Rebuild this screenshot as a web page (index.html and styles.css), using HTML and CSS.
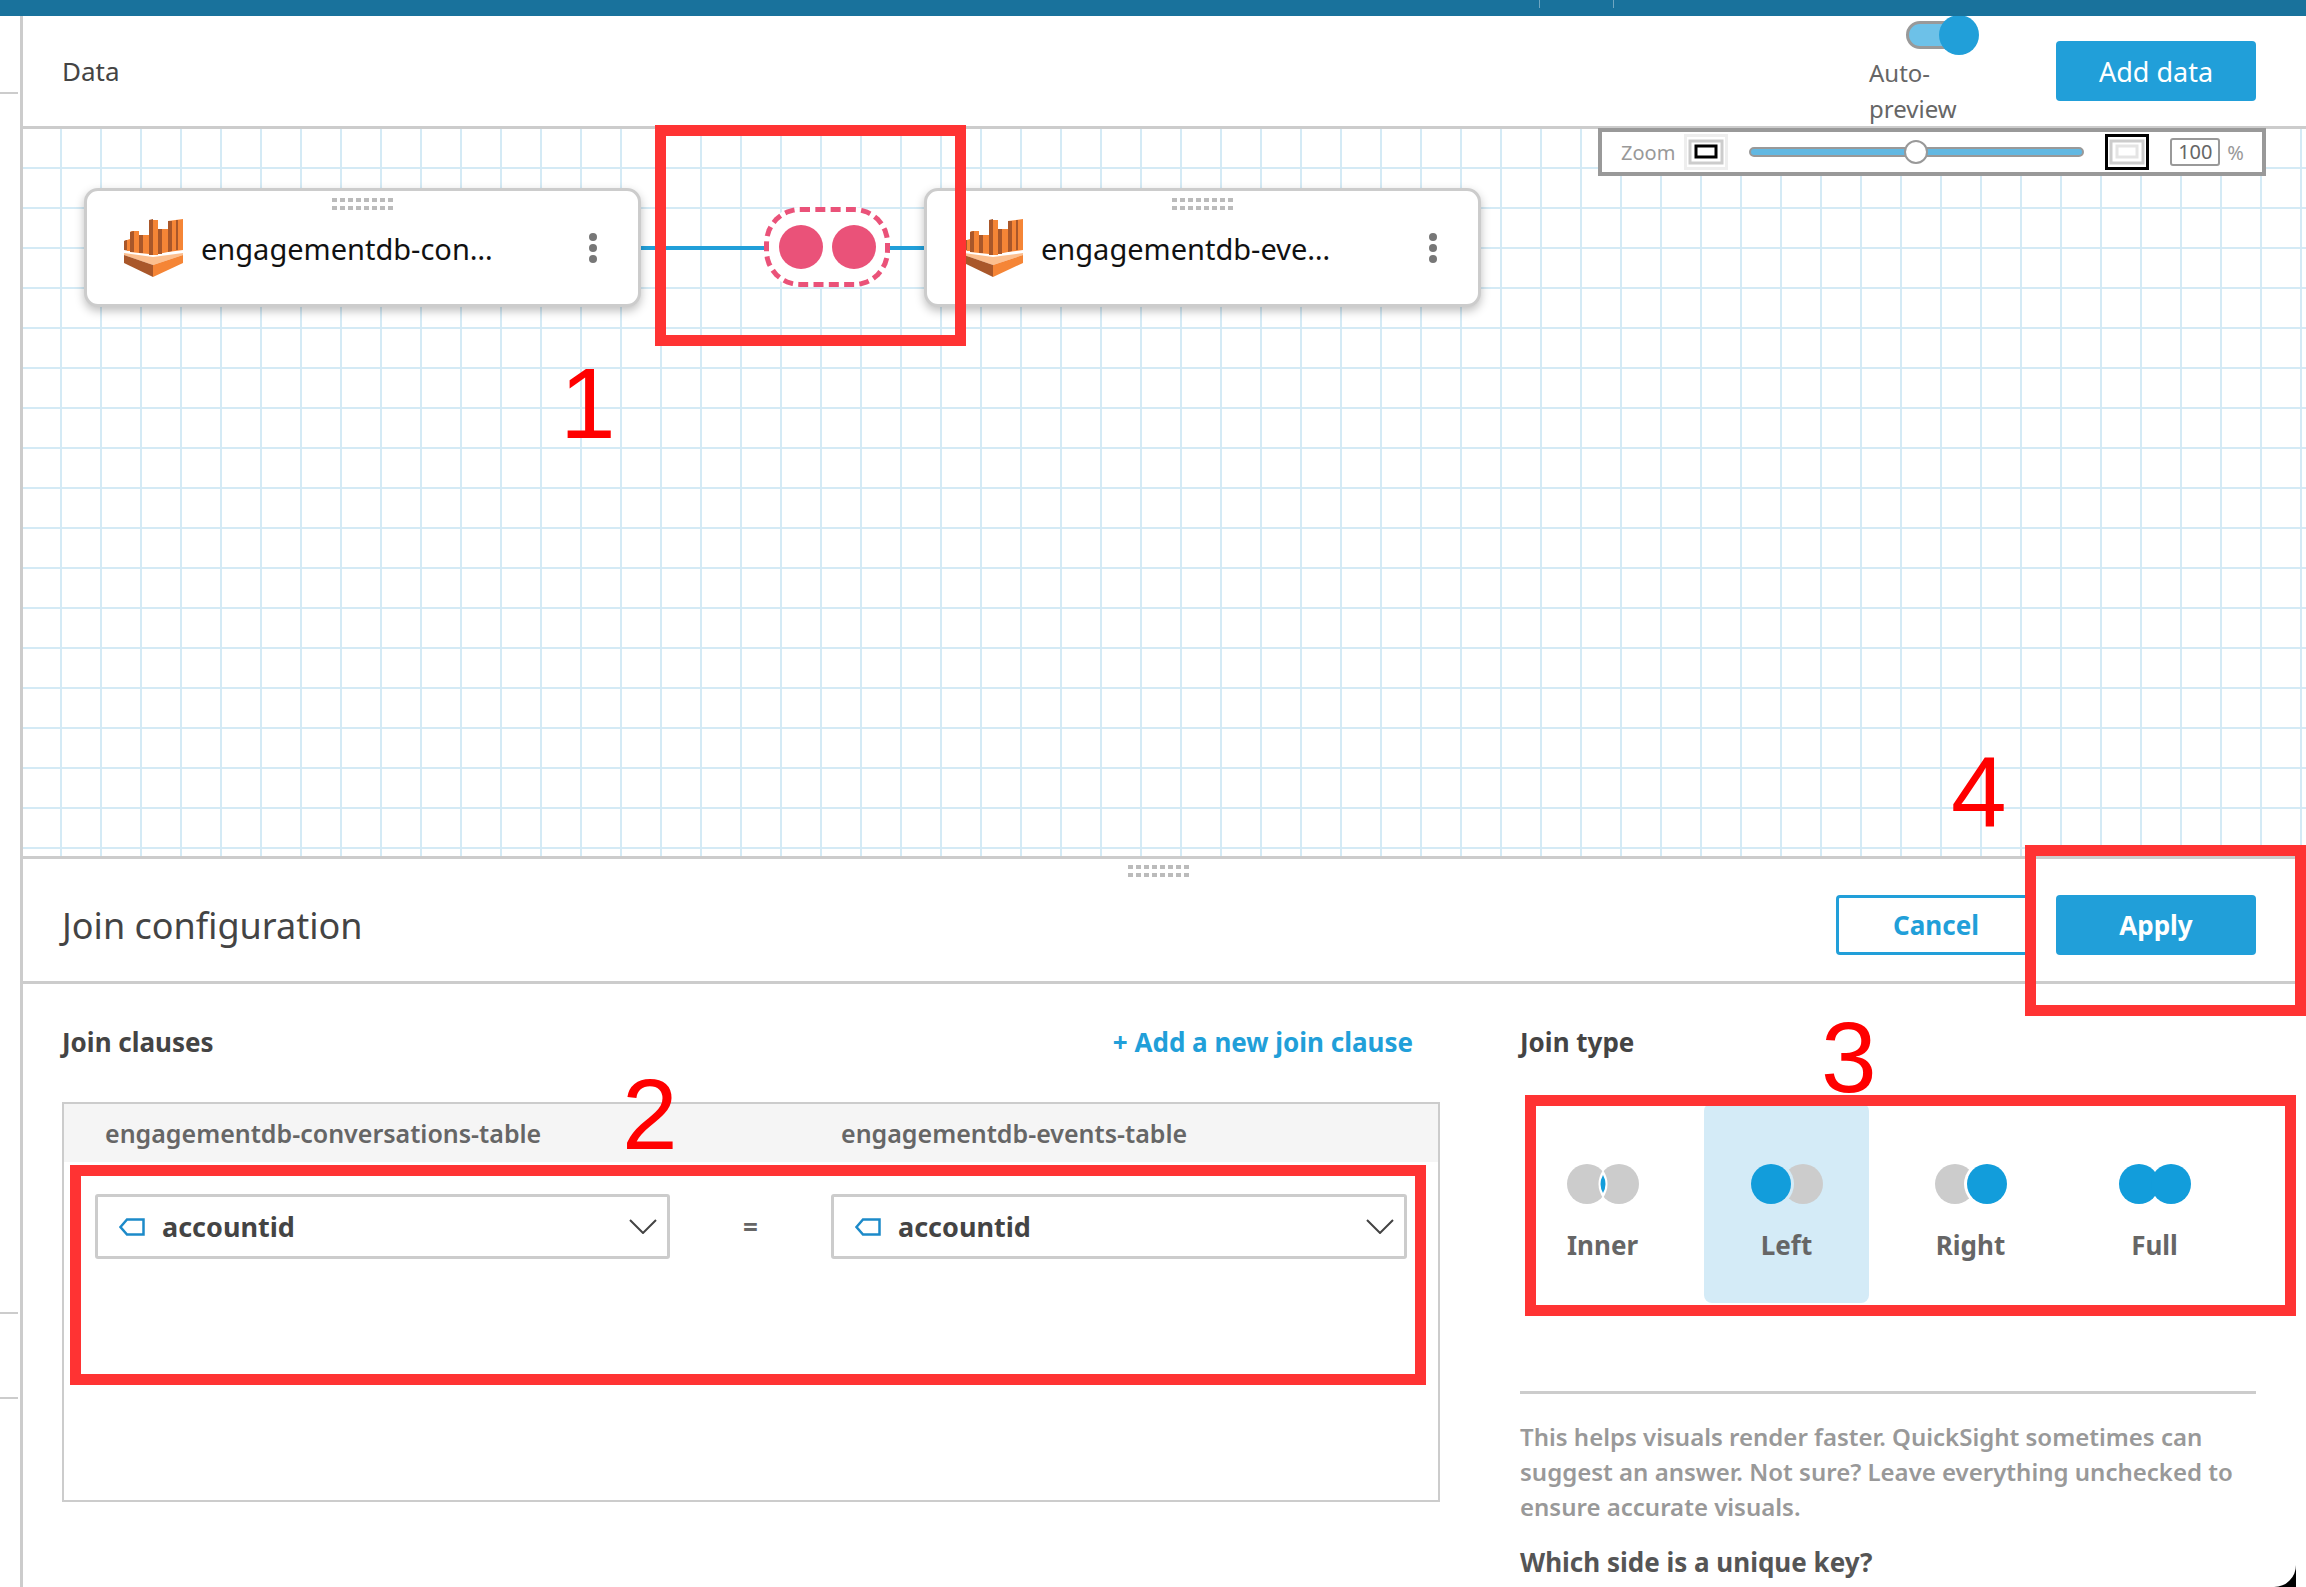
FILE: index.html
```html
<!DOCTYPE html>
<html>
  <head>
    <title>Join configuration</title>
    <link rel="stylesheet" href="styles.css">
  </head>
  <body>
    <svg class="defs" width="0" height="0">
      <symbol id="bars" viewBox="0 0 60 58">
        <polygon points="0,22 2,21 6,21 6,32 0,31" fill="#a9572a"/>
        <polygon points="3,21 6,20 6,32 3,32" fill="#f58536"/>
        <polygon points="6,13 8,12 15,12 15,34 6,33" fill="#f58536"/>
        <polygon points="6,13 10,12 10,33 6,33" fill="#a9572a"/>
        <polygon points="15,16 25,16 25,35 15,34" fill="#f58536"/>
        <polygon points="15,16 19,16 19,34 15,34" fill="#a9572a"/>
        <polygon points="25,1 34,1 34,36 25,36" fill="#f58536"/>
        <polygon points="25,1 29,0 29,36 25,36" fill="#a9572a"/>
        <polygon points="34,10 44,10 44,33 34,35" fill="#f58536"/>
        <polygon points="34,10 38,10 38,35 34,35" fill="#a9572a"/>
        <polygon points="44,2 59,0 59,31 44,33" fill="#f58536"/>
        <polygon points="44,2 48,2 48,32 44,33" fill="#a9572a"/>
        <polygon points="52,1 54,1 54,31 52,31" fill="#a9572a"/>
        <polygon points="0,34 29,38 59,34 59,36 29,46 0,36" fill="#fcbf8f"/>
        <polygon points="0,36 29,46 29,58 0,44" fill="#a9572a"/>
        <polygon points="29,46 59,36 59,44 29,58" fill="#f58536"/>
      </symbol>
    </svg>

    <div class="app">
      <div class="topbar">
        <span class="tick tick-a"></span>
        <span class="tick tick-b"></span>
      </div>

      <div class="workspace">
        <div class="rail">
          <span class="rail-line rail-a"></span>
          <span class="rail-line rail-b"></span>
          <span class="rail-line rail-c"></span>
        </div>

        <div class="content">
          <div class="data-head">
            <div class="data-title">Data</div>
            <div class="head-actions">
              <div class="preview">
                <div class="toggle">
                  <span class="toggle-track"></span>
                  <span class="toggle-knob"></span>
                </div>
                <span class="preview-label">Auto-preview</span>
              </div>
              <button class="btn btn-primary">Add data</button>
            </div>
          </div>

          <div class="canvas">
            <div class="zoom-bar">
              <span class="zoom-label">Zoom</span>
              <svg class="zoom-icon" viewBox="0 0 44 36">
                <rect x="1.5" y="1.5" width="41" height="33" fill="#fff" stroke="#eee" stroke-width="3"/>
                <rect x="6" y="7" width="32" height="22" fill="#fff" stroke="#ccc" stroke-width="3"/>
                <rect x="12" y="12" width="20" height="11" fill="#fff" stroke="#000" stroke-width="3"/>
              </svg>
              <div class="slider"><span class="slider-thumb"></span></div>
              <svg class="zoom-icon" viewBox="0 0 44 36">
                <rect x="1.5" y="1.5" width="41" height="33" fill="#fff" stroke="#000" stroke-width="3"/>
                <rect x="6" y="7" width="32" height="22" fill="#fff" stroke="#ccc" stroke-width="3"/>
                <rect x="12" y="12" width="20" height="11" fill="#fff" stroke="#e4e4e4" stroke-width="3"/>
              </svg>
              <span class="zoom-input">100</span>
              <span class="zoom-label">%</span>
            </div>

            <div class="link-line"></div>

            <div class="node node-a">
              <div class="grip"></div>
              <div class="node-row">
                <svg class="node-icon"><use href="#bars"/></svg>
                <span class="node-name">engagementdb-con…</span>
                <span class="kebab"><i></i><i></i><i></i></span>
              </div>
            </div>

            <div class="join-node">
              <span class="join-dot"></span>
              <span class="join-dot"></span>
            </div>

            <div class="node node-b">
              <div class="grip"></div>
              <div class="node-row">
                <svg class="node-icon"><use href="#bars"/></svg>
                <span class="node-name">engagementdb-eve…</span>
                <span class="kebab"><i></i><i></i><i></i></span>
              </div>
            </div>
          </div>

          <div class="join-panel">
            <div class="grip panel-grip"></div>
            <div class="join-head">
              <div class="join-title">Join configuration</div>
              <div class="join-actions">
                <button class="btn btn-outline">Cancel</button>
                <button class="btn btn-primary btn-bold">Apply</button>
              </div>
            </div>

            <div class="join-body">
              <div class="clauses">
                <div class="section-head">
                  <span class="section-title">Join clauses</span>
                  <span class="add-clause">+ Add a new join clause</span>
                </div>
                <div class="clause-table">
                  <div class="clause-grid clause-names">
                    <span>engagementdb-conversations-table</span>
                    <span></span>
                    <span>engagementdb-events-table</span>
                  </div>
                  <div class="clause-grid clause-row">
                    <div class="select">
                      <svg class="tag" viewBox="0 0 26 18"><polygon points="1.5,9 8,1.5 24.5,1.5 24.5,16.5 8,16.5" fill="none" stroke="#1c8ac9" stroke-width="2.5"/></svg>
                      <span class="select-value">accountid</span>
                      <svg class="chevron" viewBox="0 0 28 15"><polyline points="1,1 14,14 27,1" fill="none" stroke="#444" stroke-width="2"/></svg>
                    </div>
                    <span class="equals">=</span>
                    <div class="select">
                      <svg class="tag" viewBox="0 0 26 18"><polygon points="1.5,9 8,1.5 24.5,1.5 24.5,16.5 8,16.5" fill="none" stroke="#1c8ac9" stroke-width="2.5"/></svg>
                      <span class="select-value">accountid</span>
                      <svg class="chevron" viewBox="0 0 28 15"><polyline points="1,1 14,14 27,1" fill="none" stroke="#444" stroke-width="2"/></svg>
                    </div>
                  </div>
                </div>
              </div>

              <div class="join-type">
                <div class="section-head">
                  <span class="section-title">Join type</span>
                </div>
                <div class="type-tiles">
                  <div class="tile">
                    <svg class="venn" viewBox="0 0 72 40">
                      <circle cx="20" cy="20" r="20" fill="#ccc"/>
                      <circle cx="52" cy="20" r="20" fill="#ccc"/>
                      <path d="M36 6 Q27 20 36 34 Q45 20 36 6Z" fill="#fff"/>
                      <path d="M36 11 Q31 20 36 29 Q41 20 36 11Z" fill="#129ddb"/>
                    </svg>
                    <span>Inner</span>
                  </div>
                  <div class="tile tile-active">
                    <svg class="venn" viewBox="0 0 72 40">
                      <circle cx="52" cy="20" r="20" fill="#ccc"/>
                      <circle cx="20" cy="20" r="23" fill="#d4ebf7"/>
                      <circle cx="20" cy="20" r="20" fill="#129ddb"/>
                    </svg>
                    <span>Left</span>
                  </div>
                  <div class="tile">
                    <svg class="venn" viewBox="0 0 72 40">
                      <circle cx="20" cy="20" r="20" fill="#ccc"/>
                      <circle cx="52" cy="20" r="23" fill="#fff"/>
                      <circle cx="52" cy="20" r="20" fill="#129ddb"/>
                    </svg>
                    <span>Right</span>
                  </div>
                  <div class="tile">
                    <svg class="venn" viewBox="0 0 72 40">
                      <circle cx="20" cy="20" r="20" fill="#129ddb"/>
                      <circle cx="52" cy="20" r="20" fill="#129ddb"/>
                    </svg>
                    <span>Full</span>
                  </div>
                </div>
                <p class="help">This helps visuals render faster. QuickSight sometimes can suggest an answer. Not sure? Leave everything unchecked to ensure accurate visuals.</p>
                <div class="unique-key">Which side is a unique key?</div>
              </div>
            </div>
          </div>
        </div>
      </div>

      <!-- red callouts drawn over the screenshot -->
      <div class="callout callout-1"></div>
      <div class="callout callout-2"></div>
      <div class="callout callout-3"></div>
      <div class="callout callout-4"></div>
      <span class="digit digit-1">1</span>
      <span class="digit digit-2">2</span>
      <span class="digit digit-3">3</span>
      <span class="digit digit-4">4</span>

      <svg class="corner" viewBox="0 0 22 22"><path d="M22 0 V22 H0 A22 22 0 0 0 22 0Z" fill="#000"/></svg>
    </div>
  </body>
</html>
```
FILE: styles.css
```css
body { margin: 0; background: #fff; font-family: "Noto Sans", "Open Sans", sans-serif; color: #444; }

.defs { position: absolute; }

.app {
  position: relative;
  width: 2306px;
  height: 1587px;
  overflow: hidden;
  display: flex;
  flex-direction: column;
}

.topbar {
  position: relative;
  height: 16px;
  flex: none;
  background: #19729c;
}
.tick { position: absolute; top: 0; width: 1px; height: 8px; background: #6fa6c1; }
.tick-a { left: 1539px; }
.tick-b { left: 1613px; }

.workspace { flex: 1; display: flex; min-height: 0; }

.rail {
  position: relative;
  width: 20px;
  flex: none;
  border-right: 3px solid #ccc;
}
.rail-line { position: absolute; left: 0; width: 18px; height: 2px; background: #ccc; }
.rail-a { top: 76px; }
.rail-b { top: 1296px; }
.rail-c { top: 1381px; }

.content { flex: 1; min-width: 0; display: flex; flex-direction: column; }

/* Data header */
.data-head {
  height: 110px;
  flex: none;
  display: flex;
  align-items: center;
  justify-content: space-between;
  padding: 0 50px 0 39px;
  border-bottom: 3px solid #ccc;
}
.data-title { font-size: 26px; color: #444; }
.head-actions { display: flex; align-items: center; gap: 40px; }

.preview { display: flex; flex-direction: column; align-items: center; width: 147px; }
.toggle { display: flex; align-items: center; height: 40px; }
.toggle-track {
  width: 55px;
  height: 28px;
  margin-right: -22px;
  box-sizing: border-box;
  border: 3px solid #999;
  border-radius: 14px;
  background: #6dc1e8;
}
.toggle-knob { width: 40px; height: 40px; border-radius: 50%; background: #219fd9; }
.preview-label { font-size: 24px; line-height: 36px; color: #666; }

.btn {
  width: 200px;
  height: 60px;
  border-radius: 4px;
  font-family: inherit;
  font-size: 27px;
  padding: 0;
}
.btn-primary { border: none; background: #219fd9; color: #fff; }
.btn-outline { border: 3px solid #219fd9; background: #fff; color: #219fd9; font-weight: 700; font-size: 26px; }
.btn-bold { font-weight: 700; font-size: 26px; }

/* Canvas with grid */
.canvas {
  position: relative;
  height: 727px;
  flex: none;
  background-color: #fff;
  background-image:
    linear-gradient(90deg, #d4eaf5 2px, transparent 2px),
    linear-gradient(#d4eaf5 2px, transparent 2px);
  background-size: 40px 40px;
  background-position: 37px 0, 0 38px;
}

.zoom-bar {
  position: absolute;
  left: 1575px;
  top: -1px;
  width: 668px;
  height: 48px;
  box-sizing: border-box;
  border: 4px solid #999;
  background: #fff;
  display: flex;
  align-items: center;
  padding-left: 19px;
}
.zoom-label { font-size: 20px; color: #999; }
.zoom-icon { width: 44px; height: 36px; flex: none; margin-left: 9px; }
.slider {
  position: relative;
  width: 335px;
  height: 10px;
  margin: 0 12px 0 21px;
  box-sizing: border-box;
  border: 2px solid #999;
  border-radius: 5px;
  background: #62b8e2;
}
.slider-thumb {
  position: absolute;
  left: 153px;
  top: -9px;
  width: 24px;
  height: 24px;
  box-sizing: border-box;
  border: 2px solid #999;
  border-radius: 50%;
  background: #fff;
}
.zoom-input {
  width: 50px;
  height: 28px;
  margin: 0 7px 0 21px;
  box-sizing: border-box;
  border: 2px solid #999;
  border-radius: 3px;
  font-size: 20px;
  line-height: 24px;
  text-align: center;
  color: #666;
}

.link-line {
  position: absolute;
  left: 618px;
  top: 117px;
  width: 283px;
  height: 4px;
  background: #219fd9;
}

.node {
  position: absolute;
  top: 59px;
  width: 557px;
  height: 119px;
  box-sizing: border-box;
  border: 3px solid #ccc;
  border-radius: 14px;
  background: #fff;
  box-shadow: 0 4px 10px rgba(0, 0, 0, 0.25);
  display: flex;
  flex-direction: column;
  align-items: center;
  padding-top: 7px;
}
.node-a { left: 61px; }
.node-b { left: 901px; }

.grip {
  width: 61px;
  height: 12px;
  flex: none;
  background-image:
    repeating-linear-gradient(#0000 0 4px, #fff 4px 8px),
    repeating-linear-gradient(90deg, #bbb 0 5px, #fff 5px 8px);
}
.node-row {
  align-self: stretch;
  display: flex;
  align-items: center;
  padding: 9px 0 0 37px;
}
.node-icon { width: 60px; height: 58px; flex: none; }
.node-name { margin-left: 17px; font-size: 29px; color: #111; white-space: nowrap; }
.kebab { display: flex; flex-direction: column; gap: 3px; margin-left: auto; margin-right: 41px; }
.kebab i { width: 8px; height: 8px; border-radius: 50%; background: #777; }

.join-node {
  position: absolute;
  left: 741px;
  top: 78px;
  width: 126px;
  height: 80px;
  box-sizing: border-box;
  border: 5px dashed #ea5279;
  border-radius: 36px;
  background: #fff;
  display: flex;
  align-items: center;
  justify-content: center;
  gap: 9px;
}
.join-dot { width: 44px; height: 44px; border-radius: 50%; background: #ea5279; }

/* Join configuration */
.join-panel { position: relative; flex: 1; min-height: 0; border-top: 3px solid #ccc; }
.panel-grip { position: absolute; left: 1105px; top: 6px; }

.join-head {
  height: 125px;
  display: flex;
  align-items: center;
  justify-content: space-between;
  padding: 10px 50px 0 39px;
  box-sizing: border-box;
  border-bottom: 3px solid #ccc;
}
.join-title { font-size: 36px; color: #444; }
.join-actions { display: flex; gap: 20px; }

.join-body {
  display: grid;
  grid-template-columns: 1378px 736px;
  gap: 80px;
  padding: 40px 50px 0 39px;
}

.section-head {
  height: 36px;
  display: flex;
  align-items: center;
  justify-content: space-between;
}
.section-title { font-size: 26px; font-weight: 700; color: #444; }
.add-clause { margin-right: 27px; font-size: 26px; font-weight: 700; color: #219fd9; }

.clause-table {
  height: 400px;
  margin-top: 42px;
  box-sizing: border-box;
  border: 2px solid #ccc;
}
.clause-grid {
  display: grid;
  grid-template-columns: 575px 1fr 576px;
  padding: 0 31px;
}
.clause-names {
  height: 58px;
  align-items: center;
  background: #f5f5f5;
  font-size: 25px;
  font-weight: 600;
  color: #666;
}
.clause-names span { padding-left: 10px; }
.clause-row { padding-top: 32px; align-items: center; }

.select {
  height: 65px;
  box-sizing: border-box;
  border: 3px solid #ccc;
  border-radius: 3px;
  display: flex;
  align-items: center;
  padding: 0 10px 0 21px;
}
.tag { width: 26px; height: 18px; flex: none; }
.select-value { margin-left: 17px; font-size: 27px; font-weight: 700; color: #444; }
.chevron { width: 28px; height: 15px; margin-left: auto; }
.equals { text-align: center; font-size: 26px; font-weight: 700; color: #666; }

.type-tiles {
  display: grid;
  grid-template-columns: repeat(4, 165px);
  gap: 19px;
  margin-top: 43px;
}
.tile {
  height: 200px;
  box-sizing: border-box;
  padding-top: 61px;
  border-radius: 8px;
  display: flex;
  flex-direction: column;
  align-items: center;
  font-size: 26px;
  font-weight: 700;
  color: #666;
}
.tile-active { background: #d4ebf7; }
.venn { width: 72px; height: 40px; margin-bottom: 23px; }

.help {
  margin: 88px 0 0;
  padding-top: 25px;
  border-top: 3px solid #ccc;
  font-size: 24px;
  line-height: 35px;
  font-weight: 600;
  color: #999;
}
.unique-key { margin-top: 20px; font-size: 26px; font-weight: 700; color: #555; }

/* red annotations */
.callout { position: absolute; box-sizing: border-box; border: 11px solid #ff3333; }
.callout-1 { left: 655px; top: 125px; width: 311px; height: 221px; }
.callout-2 { left: 70px; top: 1165px; width: 1356px; height: 220px; }
.callout-3 { left: 1525px; top: 1095px; width: 771px; height: 221px; }
.callout-4 { left: 2025px; top: 845px; width: 281px; height: 171px; }

.digit {
  position: absolute;
  font-family: "Liberation Sans", Arial, sans-serif;
  font-size: 100px;
  line-height: 100px;
  color: #f00;
}
.digit-1 { left: 560px; top: 353px; }
.digit-2 { left: 622px; top: 1064px; }
.digit-3 { left: 1821px; top: 1007px; }
.digit-4 { left: 1951px; top: 742px; }

.corner { position: absolute; right: 10px; bottom: 0; width: 22px; height: 22px; }
```
